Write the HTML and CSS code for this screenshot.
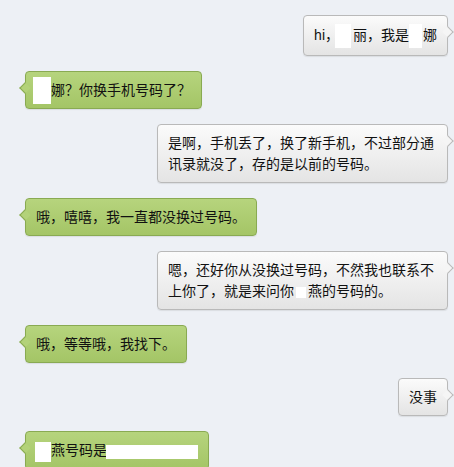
FILE: index.html
```html
<!DOCTYPE html>
<html lang="zh-CN">
<head>
  <meta charset="UTF-8" />
  <meta name="viewport" content="width=device-width, initial-scale=1.0" />
  <title>聊天记录</title>
  <link rel="stylesheet" href="styles.css">
</head>
<body>
  <div class="chat">
    <div class="bubble mine">hi，<span class="mask"></span>丽，我是<span class="mask mask-sm"></span>娜</div>
    <div class="bubble theirs"><span class="mask mask-lead"></span>娜？你换手机号码了？</div>
    <div class="bubble mine">是啊，手机丢了，换了新手机，不过部分通讯录就没了，存的是以前的号码。</div>
    <div class="bubble theirs">哦，嘻嘻，我一直都没换过号码。</div>
    <div class="bubble mine">嗯，还好你从没换过号码，不然我也联系不上你了，就是来问你<span class="mask mask-flat"></span>燕的号码的。</div>
    <div class="bubble theirs">哦，等等哦，我找下。</div>
    <div class="bubble mine">没事</div>
    <div class="bubble theirs"><span class="mask mask-lead2"></span>燕号码是<span class="mask mask-long"></span></div>
  </div>
</body>
</html>
```

FILE: styles.css
```css
body {
  margin: 0;
  background: #edf0f5;
  font-family: "Liberation Sans", "Noto Sans CJK SC", sans-serif;
  font-size: 14px;
  color: #111;
}

.chat {
  display: flex;
  flex-direction: column;
  gap: 15px;
  padding: 15px 6px 15px 25px;
}

.bubble {
  position: relative;
  max-width: 291px;
  box-sizing: border-box;
  padding: 8px 10px 7px;
  line-height: 21px;
  border-radius: 4px;
  box-shadow: 0 1px 1px rgba(0, 0, 0, 0.08);
}

/* little pointer on the side of each bubble */
.bubble::before {
  content: "";
  position: absolute;
  top: 12px;
  width: 7px;
  height: 7px;
  transform: rotate(45deg);
}

.mine {
  align-self: flex-end;
  background: linear-gradient(#fbfbfb, #e4e4e4);
  border: 1px solid #b9b9b9;
}

.mine::before {
  right: -5px;
  background: #f5f5f5;
  border-top: 1px solid #b9b9b9;
  border-right: 1px solid #b9b9b9;
}

.theirs {
  align-self: flex-start;
  background: linear-gradient(#b6d47d, #a4c566);
  border: 1px solid #89aa52;
}

.theirs::before {
  left: -5px;
  background: #b3d279;
  border-left: 1px solid #89aa52;
  border-bottom: 1px solid #89aa52;
}

.mask {
  display: inline-block;
  width: 16px;
  height: 24px;
  background: #fff;
  vertical-align: middle;
  margin-left: -4px;
  margin-right: 2px;
}

.mask-sm {
  width: 13px;
  margin: 0 1px 0 0;
}

.mask-lead {
  width: 18px;
  height: 27px;
  margin: -4px 0 -3px -3px;
}

.mask-lead2 {
  width: 16px;
  height: 20px;
  margin: 0 0 0 -1px;
}

.mask-flat {
  width: 10px;
  height: 11px;
  margin: 0 2px;
}

.mask-long {
  width: 92px;
  height: 14px;
  margin: 0 0 0 -1px;
}
```
